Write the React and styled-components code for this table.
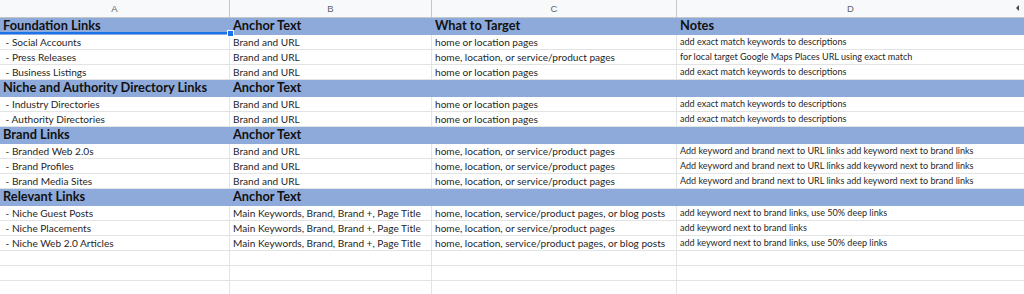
import React from "react";
import styled, { createGlobalStyle } from "styled-components";

const Global = createGlobalStyle`
  html, body { margin: 0; padding: 0; background: #fff; overflow: hidden; }
  body { font-family: Lato, "Liberation Sans", sans-serif; }
`;

const Sheet = styled.div`
  width: 1024px;
  height: 294px;
  overflow: hidden;
  background: #fff;
`;

const Row = styled.div`
  display: grid;
  grid-template-columns: 230px 202px 245px 1fr;
  height: ${p => p.h}px;
  background: ${p => (p.band ? "#8eaadb" : "#fff")};
  border-bottom: 1px solid ${p => (p.band ? "#8eaadb" : "#e2e3e3")};
  box-sizing: border-box;
`;

const HeadRow = styled.div`
  display: grid;
  grid-template-columns: 230px 202px 245px 1fr;
  height: 18px;
  background: #f8f9fa;
  border-bottom: 1px solid #c4c7c5;
  box-sizing: border-box;
`;

const HeadCell = styled.div`
  position: relative;
  display: flex;
  align-items: center;
  justify-content: center;
  font-family: "Liberation Sans", Arial, sans-serif;
  font-size: 9.5px;
  color: #5f6368;
  border-right: 1px solid #c4c7c5;
  &:last-child { border-right: none; }
`;

const Arrow = styled.span`
  position: absolute;
  right: 5px;
  top: 5px;
  width: 0;
  height: 0;
  border-top: 3px solid transparent;
  border-bottom: 3px solid transparent;
  border-right: 3px solid #444;
`;

const Cell = styled.div`
  position: relative;
  display: flex;
  align-items: flex-end;
  padding: 0 0 1px 3px;
  white-space: pre;
  overflow: visible;
  box-sizing: border-box;
  font-size: ${p => (p.small ? "9.05px" : "10.1px")};
  color: #1f1f1f;
  line-height: 12px;
  border-right: 1px solid #e2e3e3;
  &:last-child { border-right: none; }
`;

const BandCell = styled.div`
  position: relative;
  display: flex;
  align-items: flex-end;
  padding: 0 0 1px 3px;
  white-space: pre;
  box-sizing: border-box;
  font-size: 12.8px;
  font-weight: 700;
  line-height: 15px;
  color: #111;
  ${p => p.selected && `
    box-shadow: inset 0 -2px 0 #1a73e8;
  `}
`;

const Handle = styled.span`
  position: absolute;
  right: -4px;
  bottom: -3px;
  width: 5px;
  height: 5px;
  background: #1a73e8;
  border: 1px solid #fff;
  z-index: 2;
`;

const sections = [
  {
    title: "Foundation Links",
    rows: [
      [" - Social Accounts", "Brand and URL", "home or location pages", "add exact match keywords to descriptions"],
      [" - Press Releases", "Brand and URL", "home, location, or service/product pages", "for local target Google Maps Places URL using exact match"],
      [" - Business Listings", "Brand and URL", "home or location pages", "add exact match keywords to descriptions"],
    ],
    extra: ["What to Target", "Notes"],
    selected: true,
  },
  {
    title: "Niche and Authority Directory Links",
    rows: [
      [" - Industry Directories", "Brand and URL", "home or location pages", "add exact match keywords to descriptions"],
      [" - Authority Directories", "Brand and URL", "home or location pages", "add exact match keywords to descriptions"],
    ],
  },
  {
    title: "Brand Links",
    rows: [
      [" - Branded Web 2.0s", "Brand and URL", "home, location, or service/product pages", "Add keyword and brand next to URL links add keyword next to brand links"],
      [" - Brand Profiles", "Brand and URL", "home, location, or service/product pages", "Add keyword and brand next to URL links add keyword next to brand links"],
      [" - Brand Media Sites", "Brand and URL", "home, location, or service/product pages", "Add keyword and brand next to URL links add keyword next to brand links"],
    ],
  },
  {
    title: "Relevant Links",
    rows: [
      [" - Niche Guest Posts", "Main Keywords, Brand, Brand +, Page Title", "home, location, service/product pages, or blog posts", "add keyword next to brand links, use 50% deep links"],
      [" - Niche Placements", "Main Keywords, Brand, Brand +, Page Title", "home, location, or service/product pages", "add keyword next to brand links"],
      [" - Niche Web 2.0 Articles", "Main Keywords, Brand, Brand +, Page Title", "home, location, service/product pages, or blog posts", "add keyword next to brand links, use 50% deep links"],
    ],
  },
];

export default function App() {
  return (
    <Sheet>
      <Global />
      <HeadRow>
        <HeadCell>A</HeadCell>
        <HeadCell>B</HeadCell>
        <HeadCell>C</HeadCell>
        <HeadCell>D<Arrow /></HeadCell>
      </HeadRow>
      {sections.map((s, i) => (
        <React.Fragment key={i}>
          <Row band h={17}>
            <BandCell selected={s.selected}>
              {s.title}
              {s.selected && <Handle />}
            </BandCell>
            <BandCell>Anchor Text</BandCell>
            <BandCell>{s.extra ? s.extra[0] : ""}</BandCell>
            <BandCell>{s.extra ? s.extra[1] : ""}</BandCell>
          </Row>
          {s.rows.map((r, j) => (
            <Row key={j} h={15}>
              <Cell>{r[0]}</Cell>
              <Cell>{r[1]}</Cell>
              <Cell>{r[2]}</Cell>
              <Cell small>{r[3]}</Cell>
            </Row>
          ))}
        </React.Fragment>
      ))}
      {[0, 1, 2].map(k => (
        <Row key={"b" + k} h={15}>
          <Cell />
          <Cell />
          <Cell />
          <Cell />
        </Row>
      ))}
    </Sheet>
  );
}
